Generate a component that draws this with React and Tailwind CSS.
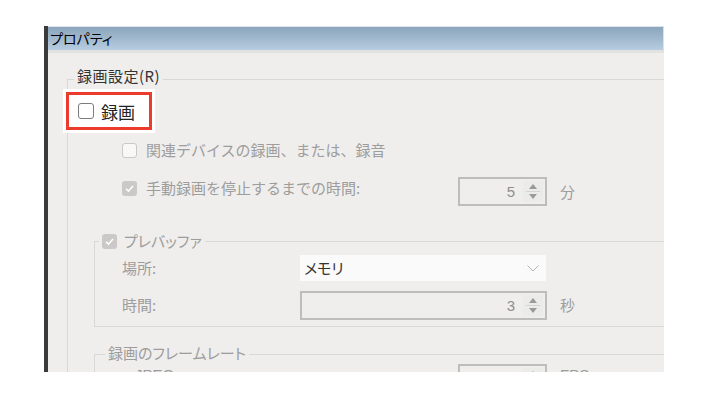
import React from 'react';

const Check = ({ checked, strong }) => {
  if (checked) {
    return (
      <span className="flex h-[15px] w-[15px] shrink-0 items-center justify-center rounded-[3px] bg-[#cbc9c7]">
        <svg width="11" height="11" viewBox="0 0 11 11">
          <path d="M2 5.8 L4.4 8.2 L9 3" fill="none" stroke="#fff" strokeWidth="1.6" />
        </svg>
      </span>
    );
  }
  return (
    <span
      className={
        strong
          ? 'h-[16px] w-[16px] shrink-0 rounded-[3px] border-[1.5px] border-[#7c7c7c] bg-white'
          : 'h-[15px] w-[15px] shrink-0 rounded-[3px] border border-[#c9c9c9] bg-[#f8f8f8]'
      }
    />
  );
};

const Spin = ({ value, width }) => (
  <div className={`flex h-[29px] shrink-0 items-center border-2 border-[#bdbdbd] ${width}`}>
    <span className="flex-1 pr-[8px] text-right font-['Liberation_Sans',sans-serif] text-[15px] leading-none text-[#8e8e8e]">
      {value}
    </span>
    <div className="mr-[2px] flex h-[21px] w-[20px] flex-col items-center justify-center bg-[#ebebea]">
      <svg width="8" height="5" viewBox="0 0 8 5">
        <path d="M0 5 L4 0 L8 5 Z" fill="#9a9a9a" />
      </svg>
      <div className="my-[2px] h-px w-[14px] bg-[#d4d4d4]" />
      <svg width="8" height="5" viewBox="0 0 8 5">
        <path d="M0 0 L4 5 L8 0 Z" fill="#9a9a9a" />
      </svg>
    </div>
  </div>
);

export default function App() {
  return (
    <div className="h-[398px] w-[708px] overflow-hidden bg-white pl-[44px] pt-[26px] font-['Noto_Sans_CJK_JP',sans-serif]">
      <div className="flex h-[346px] w-[620px]">
        <div className="w-[4px] bg-[#3b3b3b]" />
        <div className="flex flex-1 flex-col">
          <div className="h-[24px] border-r border-t border-[#dbe3ea] bg-gradient-to-b from-[#8aa5bc] to-[#b7cce0] pl-[2px] text-[14px] leading-[22px] text-black [font-feature-settings:'palt']">
            プロパティ
          </div>
          <div className="h-[3px] bg-[#e2e2e1]" />
          <div className="flex-1 overflow-hidden bg-[#efeeec] text-[15px] text-[#9d9d9d]">
            <fieldset className="ml-[19px] mt-[13px] border-l border-t border-[#d8d8d6]">
              <legend className="ml-[6px] px-[3px] pb-[6px] leading-[20px] tracking-[0.5px] text-[#333]">録画設定(R)</legend>

              <div className="-ml-[2px] flex h-[38px] w-[86px] items-center gap-[7px] border-[3px] border-[#ec3a2c] bg-white pl-[9px] shadow-[0_0_0_3px_#fff]">
                <Check strong />
                <span className="text-[17px] leading-none text-[#222]">録画</span>
              </div>

              <div className="mt-[8px] flex h-[24px] items-center gap-[9px] pl-[54px]">
                <Check />
                <span>関連デバイスの録画、または、録音</span>
              </div>

              <div className="mt-[15px] flex h-[29px] items-start pl-[54px]">
                <div className="mt-[1px] flex h-[20px] w-[336px] items-center gap-[9px]">
                  <Check checked />
                  <span>手動録画を停止するまでの時間:</span>
                </div>
                <Spin value="5" width="w-[89px]" />
                <span className="ml-[13px] leading-[29px]">分</span>
              </div>

              <fieldset className="ml-[26px] mt-[25px] border-b border-l border-t border-[#d8d8d6] pb-[6px]">
                <legend className="ml-[4px] px-[3px] [font-feature-settings:'palt']">
                  <span className="flex h-[20px] items-center gap-[7px]">
                    <Check checked />
                    <span>プレバッファ</span>
                  </span>
                </legend>
                <div className="mt-[4px] flex h-[26px] items-center pl-[27px]">
                  <span className="w-[178px]">場所:</span>
                  <div className="flex h-[26px] w-[246px] items-center justify-between bg-[#fafafa] pl-[4px] pr-[7px]">
                    <span className="text-[#333] [font-feature-settings:'palt']">メモリ</span>
                    <svg width="12" height="7" viewBox="0 0 12 7">
                      <path d="M0.5 0.5 L6 6 L11.5 0.5" fill="none" stroke="#b3b3b3" strokeWidth="1" />
                    </svg>
                  </div>
                </div>
                <div className="mt-[10px] flex h-[29px] items-center pl-[27px]">
                  <span className="w-[178px]">時間:</span>
                  <Spin value="3" width="w-[247px]" />
                  <span className="ml-[13px]">秒</span>
                </div>
              </fieldset>

              <fieldset className="ml-[26px] mt-[16px] border-l border-t border-[#d8d8d6]">
                <legend className="ml-[10px] px-[3px] pb-[2px] leading-[20px] [font-feature-settings:'palt']">録画のフレームレート</legend>
                <div className="-mt-[1px] flex h-[29px] items-start pl-[40px] font-['Liberation_Sans',sans-serif]">
                  <span className="mt-[1px] w-[323px] leading-[20px]">JPEG</span>
                  <Spin value="" width="w-[89px]" />
                  <span className="ml-[13px] mt-[1px] leading-[20px]">FPS</span>
                </div>
              </fieldset>
            </fieldset>
          </div>
        </div>
      </div>
    </div>
  );
}
